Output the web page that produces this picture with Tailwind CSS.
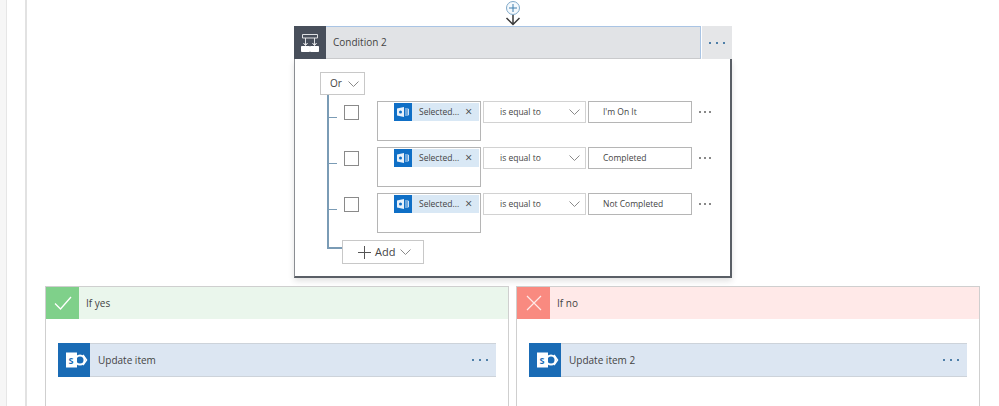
<!DOCTYPE html>
<html lang="en">
<head>
  <meta charset="UTF-8">
  <title>Condition 2</title>
  <script src="https://cdn.jsdelivr.net/npm/@tailwindcss/browser@4"></script>
</head>
<body class="bg-white overflow-hidden font-['Open_Sans',sans-serif] text-[#444]">
<div class="w-[999px] h-[406px] overflow-hidden flex">
  <!-- Outer scope rails -->
  <div class="w-[6px] shrink-0 bg-[#f6f6f6]"></div>
  <div class="w-[21px] shrink-0 border-l border-r-2 border-l-[#e6e6e6] border-r-[#e2e2e2]"></div>

  <main class="flex-1 flex flex-col">
    <!-- Insert step -->
    <div class="h-[26px] ml-[476px] w-[20px] shrink-0">
      <svg width="20" height="26" viewBox="0 0 20 26" fill="none">
        <circle cx="10" cy="8" r="6.500" fill="#f4f9fd" stroke="#7fa9c9"/>
        <path d="M6 8h8M10 4v8" stroke="#3f7fae"/>
        <path d="M10 15v9.500M3.500 18l6.500 6.500 6.500-6.500" stroke="#3a3a3a" stroke-width="1.500"/>
      </svg>
    </div>

    <!-- Condition card -->
    <section class="ml-[267px] w-[438px] shrink-0">
      <div class="flex h-[33px]">
        <div class="w-[32px] bg-[#484f5b] flex items-center justify-center">
          <svg width="20" height="20" viewBox="0 0 20 20" fill="none" stroke="#fff">
            <path d="M2.500 1.500h15v3.500h-15zM5.500 5v7M14.500 5v7" stroke="#dfe1e4"/>
            <path d="M3.500 10l2 2.500 2-2.500M12.500 10l2 2.500 2-2.500"/>
            <path d="M1.500 13.500h8v5h-8zM10.500 13.500h8v5h-8z" fill="#fff"/>
          </svg>
        </div>
        <div class="w-[375px] bg-[#e1e3e6] border-t border-r border-[#a9c4e4] border-b-[#c9cacc] border-b flex items-center pl-[7px] text-[10px]">Condition 2</div>
        <div class="w-[30px] ml-px bg-[#e5e6e8] flex items-center justify-center gap-[5px]">
          <i class="w-[2px] h-[2px] bg-[#4f7fa8]"></i><i class="w-[2px] h-[2px] bg-[#4f7fa8]"></i><i class="w-[2px] h-[2px] bg-[#4f7fa8]"></i>
        </div>
      </div>

      <div class="w-[438px] h-[219px] border-l border-r-2 border-b-2 border-l-[#8a8d92] border-r-[#5a5f66] border-b-[#5a5f66] bg-white shadow-[0_3px_6px_rgba(0,0,0,0.12)] pl-[25px] pt-[13px]">
        <div class="w-[45px] h-[23px] border border-[#c8c8c8] flex items-center pl-[9px] gap-[6px] text-[10px]">
          Or
          <svg width="11" height="6" viewBox="0 0 11 6" fill="none" stroke="#8a8a8a"><path d="M.5.500l5 5 5-5"/></svg>
        </div>

        <div class="ml-[7px] border-l-2 border-[#7a9bb5] w-[400px] h-[154px] flex flex-col gap-[6px] pt-[6px]">
          <!-- Row 1 -->
          <div class="flex h-[40px]">
            <div class="w-[8px] h-px bg-[#7a9bb5] mt-[16px]"></div>
            <div class="w-[15px] h-[15px] border border-[#8a8a8a] ml-[7px] mt-[4px]"></div>
            <div class="ml-[18px] w-[104px] h-[40px] border border-[#b5b5b5] pl-[16px] pt-px">
              <div class="w-[85px] h-[18px] bg-[#d9e8f5] flex items-center text-[8.5px]">
                <div class="w-[18px] h-[18px] bg-[#0f6fc6] flex items-center justify-center">
                  <svg width="18" height="18" viewBox="0 0 18 18"><path d="M3 5.500l7-1.500v10l-7-1.500z" fill="#e8f1fa"/><circle cx="6.500" cy="9" r="1.500" fill="#0f6fc6"/><path d="M11 6h3.500v6h-3.500M11 8h3.500M11 10h3.500" fill="none" stroke="#cfe2f5"/></svg>
                </div>
                <span class="ml-[7px]">Selected...</span>
                <span class="ml-[6px] text-[12px] leading-none">×</span>
              </div>
            </div>
            <div class="ml-[2px] w-[103px] h-[22px] border border-[#d2d2d2] flex items-center justify-between pl-[16px] pr-[5px] text-[8.5px]">
              is equal to
              <svg width="11" height="6" viewBox="0 0 11 6" fill="none" stroke="#8a8a8a"><path d="M.5.500l5 5 5-5"/></svg>
            </div>
            <div class="ml-[2px] w-[104px] h-[22px] border border-[#b5b5b5] flex items-center pl-[14px] text-[8.5px]">I'm On It</div>
            <div class="ml-[7px] h-[22px] flex items-center gap-[3px]">
              <i class="w-[2px] h-[2px] bg-[#888]"></i><i class="w-[2px] h-[2px] bg-[#888]"></i><i class="w-[2px] h-[2px] bg-[#888]"></i>
            </div>
          </div>
          <!-- Row 2 -->
          <div class="flex h-[40px]">
            <div class="w-[8px] h-px bg-[#7a9bb5] mt-[16px]"></div>
            <div class="w-[15px] h-[15px] border border-[#8a8a8a] ml-[7px] mt-[4px]"></div>
            <div class="ml-[18px] w-[104px] h-[40px] border border-[#b5b5b5] pl-[16px] pt-px">
              <div class="w-[85px] h-[18px] bg-[#d9e8f5] flex items-center text-[8.5px]">
                <div class="w-[18px] h-[18px] bg-[#0f6fc6] flex items-center justify-center">
                  <svg width="18" height="18" viewBox="0 0 18 18"><path d="M3 5.500l7-1.500v10l-7-1.500z" fill="#e8f1fa"/><circle cx="6.500" cy="9" r="1.500" fill="#0f6fc6"/><path d="M11 6h3.500v6h-3.500M11 8h3.500M11 10h3.500" fill="none" stroke="#cfe2f5"/></svg>
                </div>
                <span class="ml-[7px]">Selected...</span>
                <span class="ml-[6px] text-[12px] leading-none">×</span>
              </div>
            </div>
            <div class="ml-[2px] w-[103px] h-[22px] border border-[#d2d2d2] flex items-center justify-between pl-[16px] pr-[5px] text-[8.5px]">
              is equal to
              <svg width="11" height="6" viewBox="0 0 11 6" fill="none" stroke="#8a8a8a"><path d="M.5.500l5 5 5-5"/></svg>
            </div>
            <div class="ml-[2px] w-[104px] h-[22px] border border-[#b5b5b5] flex items-center pl-[14px] text-[8.5px]">Completed</div>
            <div class="ml-[7px] h-[22px] flex items-center gap-[3px]">
              <i class="w-[2px] h-[2px] bg-[#888]"></i><i class="w-[2px] h-[2px] bg-[#888]"></i><i class="w-[2px] h-[2px] bg-[#888]"></i>
            </div>
          </div>
          <!-- Row 3 -->
          <div class="flex h-[40px]">
            <div class="w-[8px] h-px bg-[#7a9bb5] mt-[16px]"></div>
            <div class="w-[15px] h-[15px] border border-[#8a8a8a] ml-[7px] mt-[4px]"></div>
            <div class="ml-[18px] w-[104px] h-[40px] border border-[#b5b5b5] pl-[16px] pt-px">
              <div class="w-[85px] h-[18px] bg-[#d9e8f5] flex items-center text-[8.5px]">
                <div class="w-[18px] h-[18px] bg-[#0f6fc6] flex items-center justify-center">
                  <svg width="18" height="18" viewBox="0 0 18 18"><path d="M3 5.500l7-1.500v10l-7-1.500z" fill="#e8f1fa"/><circle cx="6.500" cy="9" r="1.500" fill="#0f6fc6"/><path d="M11 6h3.500v6h-3.500M11 8h3.500M11 10h3.500" fill="none" stroke="#cfe2f5"/></svg>
                </div>
                <span class="ml-[7px]">Selected...</span>
                <span class="ml-[6px] text-[12px] leading-none">×</span>
              </div>
            </div>
            <div class="ml-[2px] w-[103px] h-[22px] border border-[#d2d2d2] flex items-center justify-between pl-[16px] pr-[5px] text-[8.5px]">
              is equal to
              <svg width="11" height="6" viewBox="0 0 11 6" fill="none" stroke="#8a8a8a"><path d="M.5.500l5 5 5-5"/></svg>
            </div>
            <div class="ml-[2px] w-[104px] h-[22px] border border-[#b5b5b5] flex items-center pl-[14px] text-[8.5px]">Not Completed</div>
            <div class="ml-[7px] h-[22px] flex items-center gap-[3px]">
              <i class="w-[2px] h-[2px] bg-[#888]"></i><i class="w-[2px] h-[2px] bg-[#888]"></i><i class="w-[2px] h-[2px] bg-[#888]"></i>
            </div>
          </div>
        </div>

        <!-- Add -->
        <div class="flex -mt-[9px] ml-[7px] h-[24px]">
          <div class="w-[15px] h-[9px] border-b-2 border-l-2 border-[#7a9bb5]"></div>
          <div class="w-[82px] h-[24px] bg-white border border-[#c8c8c8] flex items-center pl-[15px] text-[11px] font-medium">
            <svg width="13" height="13" viewBox="0 0 13 13" stroke="#555" fill="none"><path d="M6.500 0v13M0 6.500h13"/></svg>
            <span class="ml-[4px]">Add</span>
            <svg class="ml-[5px]" width="11" height="6" viewBox="0 0 11 6" fill="none" stroke="#8a8a8a"><path d="M.5.500l5 5 5-5"/></svg>
          </div>
        </div>
      </div>
    </section>

    <!-- Branches -->
    <div class="flex ml-[18px] mt-[8px] gap-[7px] h-[200px]">
      <div class="w-[464px] border border-b-0 border-[#cfcfcf]">
        <div class="h-[32px] bg-[#eaf6ec] flex items-center text-[10px]">
          <div class="w-[33px] h-[32px] bg-[#7fd08a] flex items-center justify-center">
            <svg width="18" height="14" viewBox="0 0 18 14" fill="none" stroke="#fff" stroke-width="1.300"><path d="M1 7.500l5.500 5.500L17 1"/></svg>
          </div>
          <span class="ml-[7px]">If yes</span>
        </div>
        <div class="mx-[12px] mt-[24px] h-[34px] bg-[#dce6f2] border-y border-[#cdd3da] flex items-center text-[10px]">
          <div class="w-[32px] h-[34px] bg-[#1a6bb5]">
            <svg width="32" height="34" viewBox="0 0 32 34">
              <circle cx="22" cy="17" r="4.500" fill="none" stroke="#fff" stroke-width="2"/>
              <path d="M25 12l3.500 5-3.500 5" fill="none" stroke="#fff" stroke-width="1.500"/>
              <rect x="8" y="9.500" width="11" height="15" fill="#fff"/>
              <text x="10.500" y="21" font-size="9" font-weight="700" fill="#1a6bb5">S</text>
            </svg>
          </div>
          <span class="ml-[8px]">Update item</span>
          <div class="ml-auto mr-[8px] flex gap-[5px]">
            <i class="w-[2px] h-[2px] bg-[#4f7fa8]"></i><i class="w-[2px] h-[2px] bg-[#4f7fa8]"></i><i class="w-[2px] h-[2px] bg-[#4f7fa8]"></i>
          </div>
        </div>
      </div>
      <div class="w-[464px] border border-b-0 border-[#cfcfcf]">
        <div class="h-[32px] bg-[#ffe9e8] flex items-center text-[10px]">
          <div class="w-[33px] h-[32px] bg-[#f98a80] flex items-center justify-center">
            <svg width="16" height="16" viewBox="0 0 16 16" fill="none" stroke="#ffe9e8" stroke-width="1.200"><path d="M1 1l14 14M15 1L1 15"/></svg>
          </div>
          <span class="ml-[7px]">If no</span>
        </div>
        <div class="mx-[12px] mt-[24px] h-[34px] bg-[#dce6f2] border-y border-[#cdd3da] flex items-center text-[10px]">
          <div class="w-[32px] h-[34px] bg-[#1a6bb5]">
            <svg width="32" height="34" viewBox="0 0 32 34">
              <circle cx="22" cy="17" r="4.500" fill="none" stroke="#fff" stroke-width="2"/>
              <path d="M25 12l3.500 5-3.500 5" fill="none" stroke="#fff" stroke-width="1.500"/>
              <rect x="8" y="9.500" width="11" height="15" fill="#fff"/>
              <text x="10.500" y="21" font-size="9" font-weight="700" fill="#1a6bb5">S</text>
            </svg>
          </div>
          <span class="ml-[8px]">Update item 2</span>
          <div class="ml-auto mr-[8px] flex gap-[5px]">
            <i class="w-[2px] h-[2px] bg-[#4f7fa8]"></i><i class="w-[2px] h-[2px] bg-[#4f7fa8]"></i><i class="w-[2px] h-[2px] bg-[#4f7fa8]"></i>
          </div>
        </div>
      </div>
    </div>
  </main>
</div>
</body>
</html>
